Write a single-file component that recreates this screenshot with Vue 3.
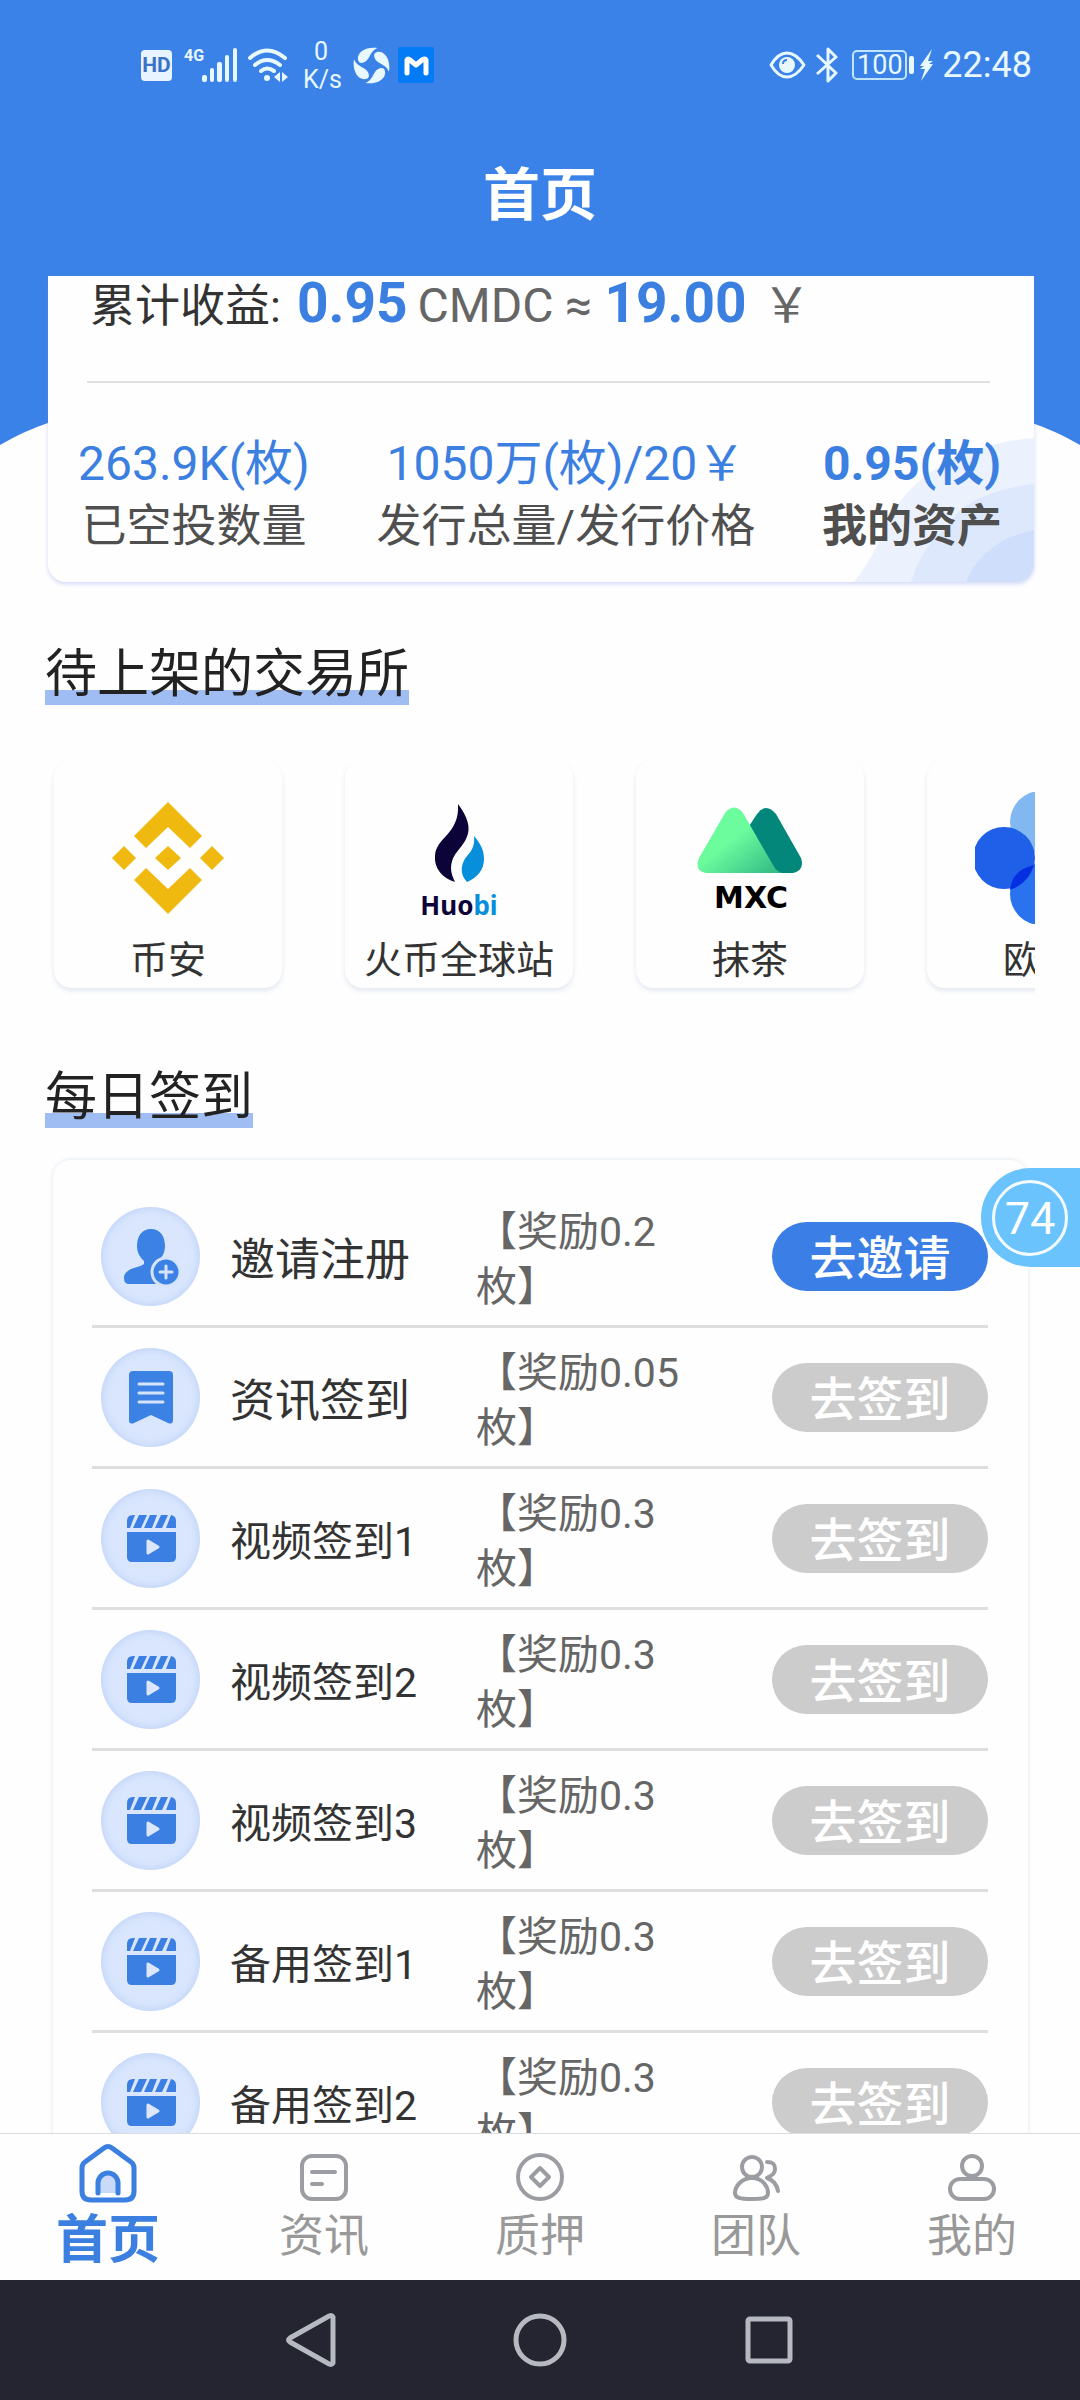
<script setup>
const stats = [
  { value: '263.9K(枚)', label: '已空投数量' },
  { value: '1050万(枚)/20￥', label: '发行总量/发行价格' },
  { value: '0.95(枚)', label: '我的资产', strong: true },
]

const exchanges = [
  { id: 'binance', name: '币安' },
  { id: 'huobi', name: '火币全球站' },
  { id: 'mxc', name: '抹茶' },
  { id: 'okx', name: '欧易' },
]

const tasks = [
  { icon: 'invite', name: '邀请注册', reward: '0.2', action: '去邀请', active: true },
  { icon: 'news', name: '资讯签到', reward: '0.05', action: '去签到' },
  { icon: 'video', name: '视频签到1', reward: '0.3', action: '去签到' },
  { icon: 'video', name: '视频签到2', reward: '0.3', action: '去签到' },
  { icon: 'video', name: '视频签到3', reward: '0.3', action: '去签到' },
  { icon: 'video', name: '备用签到1', reward: '0.3', action: '去签到' },
  { icon: 'video', name: '备用签到2', reward: '0.3', action: '去签到' },
]

const tabs = [
  { id: 'home', name: '首页' },
  { id: 'news', name: '资讯' },
  { id: 'stake', name: '质押' },
  { id: 'team', name: '团队' },
  { id: 'mine', name: '我的' },
]
</script>

<template>
  <div class="shell">
    <svg class="backdrop" viewBox="0 0 1080 445" preserveAspectRatio="none" aria-hidden="true">
      <path d="M0 0H1080V445Q1056 431 1032 423H48Q24 431 0 445Z" fill="#3b82e8" />
    </svg>

    <div class="status">
      <div class="status-group">
        <span class="hd">HD</span>
        <div class="signal">
          <span class="gen">4G</span>
          <svg width="36" height="34" viewBox="0 0 36 34" fill="#e8f8ff" aria-hidden="true">
            <rect x="0" y="27" width="5" height="7" rx="2" />
            <rect x="8" y="20" width="4" height="14" rx="2" />
            <rect x="15" y="14" width="5" height="20" rx="2" />
            <rect x="23" y="7" width="4" height="27" rx="2" />
            <rect x="31" y="0" width="4" height="34" rx="2" />
          </svg>
        </div>
        <svg class="wifi" width="40" height="34" viewBox="0 0 40 34" fill="none" stroke="#e8f8ff" stroke-width="4" stroke-linecap="round" aria-hidden="true">
          <path d="M2 10Q19-5 37 10M7 17Q19 7 32 17M13 23Q19 18 26 23" />
          <circle cx="19" cy="30" r="3" fill="#e8f8ff" stroke="none" />
          <path d="M32 24V34L26 29ZM34 24V34L40 29Z" fill="#e8f8ff" stroke="none" />
        </svg>
        <div class="speed"><span>0</span><span>K/s</span></div>
        <svg class="swirl" width="37" height="37" viewBox="0 0 36 36" fill="#e8f8ff" aria-hidden="true">
          <path
            v-for="angle in [0, 90, 180, 270]"
            :key="angle"
            d="M5 13C3 5 13-1 24 1C19 3 18 6 15 11C12 16 6 17 5 13Z"
            :transform="`rotate(${angle} 18 18)`"
          />
        </svg>
        <svg class="mapp" width="36" height="36" viewBox="0 0 36 36" aria-hidden="true">
          <rect width="36" height="36" rx="2" fill="#037bf7" />
          <path d="M9 26V13Q10 11 12 13L18 18L24 13Q27 11 28 13V26" fill="none" stroke="#fff" stroke-width="5" stroke-linecap="round" stroke-linejoin="round" />
        </svg>
      </div>
      <div class="status-group">
        <svg width="37" height="28" viewBox="0 0 37 28" aria-hidden="true">
          <path d="M2 14Q9 2 18 2T35 14Q27 26 18 26T2 14Z" fill="none" stroke="#e8f8ff" stroke-width="3" stroke-linejoin="round" />
          <circle cx="18" cy="14" r="8" fill="#e8f8ff" />
          <path d="M14 13Q14 9 18 9" fill="none" stroke="#3b82e8" stroke-width="2" />
        </svg>
        <svg class="bt" width="22" height="36" viewBox="0 0 22 36" fill="none" stroke="#e8f8ff" stroke-width="3" stroke-linejoin="round" aria-hidden="true">
          <path d="M1 8L20 26L12 34V2L20 10L1 27" />
        </svg>
        <span class="battery">100</span>
        <svg class="bolt" width="14" height="32" viewBox="0 0 14 32" fill="#e8f8ff" aria-hidden="true">
          <path d="M13 0L1 17H5L1 20H6L2 32L14 15H10L14 12H9Z" />
        </svg>
        <span class="clock">22:48</span>
      </div>
    </div>

    <header class="topbar"><h1>首页</h1></header>

    <main class="content">
      <section class="asset-card">
        <svg class="petals" width="180" height="146" viewBox="0 0 180 146" aria-hidden="true">
          <path d="M0 146Q14 128 24 108Q36 72 62 48Q105 8 180 2V146Z" fill="#ecf2fd" />
          <path d="M57 146Q68 110 92 92Q112 56 180 48V146Z" fill="#dde8fc" />
          <path d="M112 146Q130 104 180 94V146Z" fill="#cfdefb" />
        </svg>
        <p class="earnings">
          <span class="caption">累计收益:</span>
          <strong>0.95</strong>
          <span>CMDC ≈</span>
          <strong>19.00</strong>
          <span class="yen">￥</span>
        </p>
        <div class="stats">
          <div v-for="s in stats" :key="s.label" class="stat" :class="{ strong: s.strong }">
            <span class="stat-value">{{ s.value }}</span>
            <span class="stat-label">{{ s.label }}</span>
          </div>
        </div>
      </section>

      <h2 class="section-title">待上架的交易所</h2>
      <div class="strip">
        <article v-for="e in exchanges" :key="e.id" class="exchange">
          <svg v-if="e.id === 'binance'" width="132" height="132" viewBox="0 0 132 132" fill="#f0b90f" aria-hidden="true">
            <path d="M66 10L100 44L88 56L66 35L44 56L32 44ZM66 122L100 88L88 76L66 97L44 76L32 88ZM22 54L34 66L22 78L10 66ZM66 54L79 66L66 78L53 66ZM110 54L122 66L110 78L98 66Z" />
          </svg>
          <svg v-else-if="e.id === 'huobi'" width="132" height="132" viewBox="0 0 132 132" aria-hidden="true">
            <path d="M65 12C74 24 79 36 73 47C67 59 59 61 58 76C58 81 60 86 62 90C49 86 41 76 42 64C43 45 67 42 65 12Z" fill="#0c0338" />
            <path d="M81 44C89 53 91 60 91 67C91 78 84 86 74 90C66 82 68 71 74 64C79 59 82 53 81 44Z" fill="#078fdb" />
            <text x="66" y="123" text-anchor="middle" class="huobi-text"><tspan fill="#0c0338">Huo</tspan><tspan fill="#078fdb">bi</tspan></text>
          </svg>
          <svg v-else-if="e.id === 'mxc'" width="132" height="132" viewBox="0 0 132 132" aria-hidden="true">
            <defs>
              <linearGradient id="mint" x1="0" y1="0" x2="1" y2="1">
                <stop offset="45%" stop-color="#6cfb9d" />
                <stop offset="100%" stop-color="#2fb684" />
              </linearGradient>
            </defs>
            <path d="M73 22Q82 10 92 22L117 66Q121 78 109 81H92L60 42Z" fill="#03877b" />
            <path d="M41 21Q50 10 59 21L89 73Q92 79 98 81H22Q10 79 15 66Z" fill="url(#mint)" />
            <text x="67" y="116" text-anchor="middle" class="mxc-text">MXC</text>
          </svg>
          <svg v-else width="132" height="132" viewBox="0 0 132 132" aria-hidden="true">
            <circle cx="66" cy="30" r="31" fill="#82b8f2" />
            <circle cx="66" cy="102" r="31" fill="#2b72ee" />
            <circle cx="29" cy="66" r="31" fill="#205fe8" />
            <circle cx="103" cy="66" r="31" fill="#205fe8" />
            <path d="M35 98Q37 78 59 73Q53 92 35 98Z" fill="#0430e2" />
          </svg>
          <span class="exchange-name">{{ e.name }}</span>
        </article>
      </div>

      <h2 class="section-title daily">每日签到</h2>
      <ul class="tasks">
        <li v-for="t in tasks" :key="t.name" class="task">
          <span class="badge">
            <svg v-if="t.icon === 'invite'" width="60" height="60" viewBox="0 0 60 60" aria-hidden="true">
              <path d="M30 3C39 3 44 10 44 20C44 28 40 32 37 35V41L44 58H8Q3 58 3 52C3 42 18 42 23 38V35C19 31 16 27 16 20C16 10 21 3 30 3Z" fill="#3b82e4" />
              <circle cx="45" cy="46" r="14" fill="#3b82e4" stroke="#d6e3fc" stroke-width="3" />
              <path d="M45 40V52M39 46H51" stroke="#d6e3fc" stroke-width="3" stroke-linecap="round" />
            </svg>
            <svg v-else-if="t.icon === 'news'" width="60" height="60" viewBox="0 0 60 60" aria-hidden="true">
              <path d="M8 8Q8 4 12 4H48Q52 4 52 8V53Q52 58 47 56L30 48L13 56Q8 58 8 53Z" fill="#3b82e4" />
              <path d="M18 17H42M18 26H42M18 35H42" stroke="#d6e3fc" stroke-width="3" stroke-linecap="round" />
            </svg>
            <svg v-else width="60" height="60" viewBox="0 0 60 60" aria-hidden="true">
              <path d="M6 24H55V49Q55 54 50 54H11Q6 54 6 49Z" fill="#3b7fe2" />
              <path d="M6 20V13Q6 7 12 7H14L9 20ZM18 7H26L20 20H12ZM29 7H36L31 20H23ZM40 7H47L41 20H34ZM50 7Q55 8 55 13V20H45Z" fill="#3b7fe2" />
              <path d="M27 33V45L37 39Z" fill="#dce7fd" stroke="#dce7fd" stroke-width="3" stroke-linejoin="round" />
            </svg>
          </span>
          <span class="task-name" :class="{ compact: t.icon === 'video' }">{{ t.name }}</span>
          <span class="reward">【奖励{{ t.reward }}枚】</span>
          <button type="button" class="action" :class="{ active: t.active }">{{ t.action }}</button>
        </li>
      </ul>
    </main>

    <nav class="tabs">
      <a v-for="t in tabs" :key="t.id" href="#" class="tab" :class="{ current: t.id === 'home' }">
        <svg v-if="t.id === 'home'" width="60" height="60" viewBox="0 0 60 60" fill="none" stroke="#3b7fe0" stroke-width="5" stroke-linejoin="round" aria-hidden="true">
          <path d="M26 5Q30 2 34 5L53 19Q56 21 56 25V48Q56 57 47 57H13Q4 57 4 48V25Q4 21 7 19Z" />
          <path d="M20 50V40A10 10 0 0 1 40 40V50" fill="#c9daf9" stroke-linecap="round" />
        </svg>
        <svg v-else width="48" height="48" viewBox="0 0 48 48" fill="none" stroke="#9b9da2" stroke-width="4" stroke-linecap="round" stroke-linejoin="round" aria-hidden="true">
          <g v-if="t.id === 'news'">
            <rect x="2" y="3" width="44" height="43" rx="10" />
            <path d="M12 19H35M12 31H22" />
          </g>
          <g v-else-if="t.id === 'stake'">
            <circle cx="24" cy="24" r="22" />
            <path d="M24 15L33 24L24 33L15 24Z" />
          </g>
          <g v-else-if="t.id === 'team'">
            <circle cx="20" cy="14" r="10" />
            <path d="M20 25C9 25 3 34 3 40C3 45 8 46 20 46S36 45 36 40C36 34 31 25 20 25Z" />
            <path d="M35 9C42 9 43 12 43 16C43 21 40 22 35 25C41 27 45 32 46 38" />
          </g>
          <g v-else>
            <circle cx="24" cy="13" r="10" />
            <rect x="2" y="26" width="44" height="20" rx="10" />
          </g>
        </svg>
        <span>{{ t.name }}</span>
      </a>
    </nav>

    <div class="keys">
      <button type="button" aria-label="返回">
        <svg width="54" height="54" viewBox="0 0 54 54"><path d="M49 4V50Q48 52 45 51L6 29Q3 27 6 25L45 3Q48 2 49 4Z" /></svg>
      </button>
      <button type="button" aria-label="主屏幕">
        <svg width="54" height="54" viewBox="0 0 54 54"><circle cx="27" cy="27" r="24" /></svg>
      </button>
      <button type="button" aria-label="最近任务">
        <svg width="54" height="54" viewBox="0 0 54 54"><rect x="6" y="6" width="42" height="42" rx="2" /></svg>
      </button>
    </div>

    <button type="button" class="floater"><span>74</span></button>
  </div>
</template>

<style>
body {
  margin: 0;
  background: #fefefe;
}
</style>

<style scoped>
.shell {
  position: relative;
  display: flex;
  flex-direction: column;
  height: 100vh;
  overflow: hidden;
  background: #fefefe;
  color: #333;
  font-family: Roboto, 'Noto Sans CJK SC', sans-serif;
}
h1,
h2,
p,
ul {
  margin: 0;
  padding: 0;
}
button {
  border: 0;
  padding: 0;
  font-family: inherit;
}
svg {
  display: block;
  flex: none;
}
.backdrop {
  position: absolute;
  top: 0;
  left: 0;
  width: 100%;
  height: 445px;
}

/* status bar */
.status {
  position: relative;
  display: flex;
  justify-content: space-between;
  height: 130px;
  padding: 0 48px 0 141px;
  color: #e8f8ff;
}
.status-group {
  display: flex;
  align-items: center;
}
.hd {
  width: 31px;
  border-radius: 4px;
  background: #e8f4ff;
  color: #3b72c8;
  font-size: 21px;
  font-weight: 700;
  line-height: 31px;
  text-align: center;
}
.signal {
  display: flex;
  align-items: flex-start;
  margin-left: 12px;
}
.gen {
  width: 18px;
  font-size: 16px;
  font-weight: 700;
  line-height: 16px;
}
.wifi {
  margin-left: 10px;
}
.speed {
  display: flex;
  flex-direction: column;
  width: 36px;
  margin-left: 15px;
  padding-top: 2px;
  font-size: 25px;
  line-height: 28px;
  text-align: center;
}
.swirl {
  margin-left: 14px;
}
.mapp {
  margin-left: 8px;
}
.bt {
  margin-left: 10px;
}
.battery {
  position: relative;
  box-sizing: border-box;
  width: 55px;
  margin-left: 14px;
  border: 2px solid #bfe4ff;
  border-radius: 5px;
  font-size: 27px;
  line-height: 26px;
  text-align: center;
}
.battery::after {
  content: '';
  position: absolute;
  top: 4px;
  right: -9px;
  width: 5px;
  height: 18px;
  border-radius: 2px;
  background: #e8f8ff;
}
.bolt {
  margin-left: 12px;
}
.clock {
  margin-left: 9px;
  font-size: 36px;
}

.topbar {
  position: relative;
  text-align: center;
}
.topbar h1 {
  color: #fff;
  font-size: 57px;
  font-weight: 700;
  line-height: 132px;
}

.content {
  position: relative;
  flex: 1;
  min-height: 0;
  padding-top: 14px;
  overflow: hidden;
}

/* asset summary */
.asset-card {
  position: relative;
  margin: 0 46px 0 48px;
  padding: 0 32px 24px 30px;
  border-radius: 0 0 18px 18px;
  background: #fefefe;
  box-shadow: 0 2px 4px rgba(110, 130, 230, 0.3);
}
.petals {
  position: absolute;
  right: 0;
  bottom: 0;
  border-bottom-right-radius: 18px;
}
.earnings {
  position: relative;
  display: flex;
  align-items: baseline;
  margin: 0 12px 0 9px;
  padding: 0 0 47px 3px;
  border-bottom: 2px solid #e0e0e0;
  color: #666;
  font-size: 48px;
  line-height: 54px;
}
.earnings .caption {
  color: #333;
  font-size: 45px;
}
.earnings strong {
  margin: 0 10px 0 12px;
  color: #3b7fe0;
  font-size: 55px;
}
.earnings .caption + strong {
  margin-left: 16px;
}
.earnings .yen {
  margin-left: 6px;
}
.stats {
  position: relative;
  display: flex;
  justify-content: space-between;
  padding-top: 49px;
}
.stat {
  display: flex;
  flex-direction: column;
  align-items: center;
  line-height: 63px;
}
.stat-value {
  color: #3b7fe0;
  font-size: 48px;
}
.stat-label {
  color: #4f4f4f;
  font-size: 45px;
}
.strong {
  font-weight: 700;
}

.section-title {
  display: table;
  margin: 63px 0 0 45px;
  background: linear-gradient(#9fbdf3, #9fbdf3) 0 100% / 100% 15px no-repeat;
  color: #222;
  font-size: 52px;
  font-weight: 400;
  line-height: 60px;
}
.daily {
  margin-top: 68px;
}

/* exchanges */
.strip {
  display: flex;
  gap: 63px;
  margin: 43px 45px 0 44px;
  padding: 12px 0 12px 10px;
  overflow: hidden;
}
.exchange {
  display: flex;
  flex: none;
  flex-direction: column;
  align-items: center;
  box-sizing: border-box;
  width: 228px;
  padding-top: 32px;
  border-radius: 18px;
  background: #fefefe;
  box-shadow: 0 3px 5px rgba(120, 150, 190, 0.2);
}
.exchange-name {
  margin-top: 8px;
  font-size: 38px;
  line-height: 56px;
}
.huobi-text {
  font-family: 'Noto Sans', sans-serif;
  font-size: 26px;
  font-weight: 700;
}
.mxc-text {
  font-family: 'DejaVu Sans', sans-serif;
  font-size: 30px;
  font-weight: 700;
}

/* daily check-in */
.tasks {
  margin: 32px 52px 0 53px;
  padding: 27px 40px 0 39px;
  border-radius: 18px;
  box-shadow: 0 0 4px rgba(120, 150, 190, 0.25);
  list-style: none;
}
.task {
  display: flex;
  align-items: center;
  box-sizing: border-box;
  height: 141px;
  padding-left: 9px;
  border-bottom: 3px solid #dedede;
}
.badge {
  display: flex;
  flex: none;
  align-items: center;
  justify-content: center;
  width: 99px;
  height: 99px;
  border-radius: 50%;
  background: #d9e6fd;
  box-shadow: inset 0 0 10px #b9cdf6;
}
.task-name {
  width: 246px;
  margin-left: 30px;
  font-size: 45px;
}
.task-name.compact {
  font-size: 41px;
}
.reward {
  width: 222px;
  padding-top: 8px;
  color: #666;
  font-size: 41px;
  line-height: 55px;
}
.action {
  width: 216px;
  height: 69px;
  margin-left: auto;
  padding-top: 4px;
  border-radius: 35px;
  background: #ccc;
  color: #fff;
  font-size: 47px;
  font-weight: 500;
  line-height: 65px;
}
.action.active {
  background: #3b7fe6;
}

/* bottom tabs */
.tabs {
  position: relative;
  display: flex;
  box-sizing: border-box;
  height: 147px;
  border-top: 1px solid #d9dddd;
  background: #fefefe;
}
.tab {
  display: flex;
  flex: 1;
  flex-direction: column;
  align-items: center;
  padding-top: 19px;
  color: #999;
  font-size: 45px;
  line-height: 72px;
  text-decoration: none;
}
.tab.current {
  padding-top: 9px;
  color: #3b7fe0;
  font-size: 52px;
  font-weight: 700;
  line-height: 76px;
}

.keys {
  display: flex;
  align-items: center;
  justify-content: center;
  gap: 175px;
  height: 120px;
  background: #242530;
}
.keys button {
  background: none;
}
.keys svg {
  fill: none;
  stroke: #b6b9bf;
  stroke-width: 5px;
}

.floater {
  position: absolute;
  top: 1168px;
  right: 0;
  display: flex;
  align-items: center;
  width: 99px;
  height: 99px;
  border-radius: 50px 0 0 50px;
  background: #6ac3fd;
  color: #fff;
}
.floater span {
  box-sizing: border-box;
  width: 76px;
  height: 76px;
  margin-left: 11px;
  border: 3px solid #f4fbff;
  border-radius: 50%;
  font-size: 45px;
  line-height: 72px;
}
</style>
